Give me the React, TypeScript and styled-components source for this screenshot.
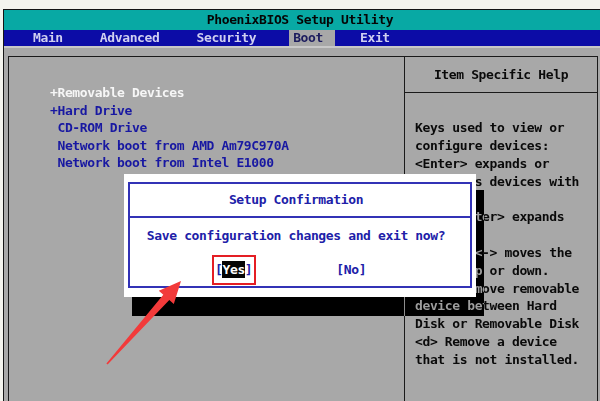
import React from 'react';
import styled, { createGlobalStyle } from 'styled-components';

const GlobalStyle = createGlobalStyle`
  html, body {
    margin: 0;
    padding: 0;
    background: #f4f4ee;
  }
`;

const MONO = `"DejaVu Sans Mono", "Liberation Mono", monospace`;

const Screen = styled.div`
  position: relative;
  width: 600px;
  height: 401px;
  box-sizing: border-box;
  padding: 9px 0 0 3px;
  background: #f4f4ee;
  overflow: hidden;
  font-family: ${MONO};
  font-size: 13px;
  letter-spacing: -0.37px;
  font-weight: bold;
`;

const Frame = styled.div`
  height: 100%;
  display: flex;
  flex-direction: column;
  border-top: 1px solid #151515;
  border-left: 1px solid #151515;
`;

const TitleBar = styled.div`
  height: 20px;
  line-height: 20px;
  background: #08a9a4;
  color: #050505;
  text-align: center;
  padding-right: 4px;
`;

const MenuBar = styled.div`
  height: 16px;
  display: flex;
  gap: 21px;
  padding-left: 25px;
  background: #0c0ca6;
`;

const Tab = styled.div<{ $active?: boolean }>`
  line-height: 16px;
  padding: 0 12px 0 4px;
  color: ${(p) => (p.$active ? '#1c1c5e' : '#cfcff0')};
  background: ${(p) => (p.$active ? '#a8a8a8' : 'transparent')};
`;

const Body = styled.div`
  flex: 1;
  display: flex;
  background: #a8a8a8;
  border-top: 2px solid #c8c8c8;
  padding: 8px 2px 0 4px;
`;

const Panels = styled.div`
  flex: 1;
  display: flex;
  border: 1px solid #1a1a1a;
  border-bottom: none;
`;

const BootList = styled.div`
  width: 396px;
  border-right: 1px solid #1a1a1a;
  padding: 27px 0 0 41px;
  box-sizing: border-box;
  line-height: 17.6px;
`;

const BootItem = styled.div<{ $selected?: boolean }>`
  white-space: pre;
  color: ${(p) => (p.$selected ? '#f6f6f6' : '#1818a2')};
`;

const HelpPanel = styled.div`
  flex: 1;
  display: flex;
  flex-direction: column;
`;

const HelpHeader = styled.div`
  height: 35px;
  line-height: 35px;
  text-align: center;
  color: #0a0a0a;
  border-bottom: 1px solid #1a1a1a;
`;

const HelpText = styled.div`
  padding: 26px 0 0 10px;
  line-height: 17.85px;
  color: #0a0a0a;
  white-space: pre;
`;

/* drop shadow of the popup: inverts the gray backdrop to black */
const DialogShadow = styled.div`
  position: absolute;
  left: 132px;
  top: 190px;
  width: 352px;
  height: 126px;
  background: #a8a8a8;
  mix-blend-mode: difference;
`;

const Dialog = styled.div`
  position: absolute;
  left: 124px;
  top: 174px;
  width: 352px;
  height: 123px;
  box-sizing: border-box;
  padding: 8px 4px 9px 4px;
  background: #ffffff;
  display: flex;
`;

const DialogInner = styled.div`
  flex: 1;
  display: flex;
  flex-direction: column;
  border: 2px solid #3232b6;
  color: #2020a8;
`;

const DialogTitle = styled.div`
  height: 32px;
  line-height: 32px;
  text-align: center;
  padding-right: 8px;
  border-bottom: 2px solid #3232b6;
`;

const Question = styled.div`
  padding: 9px 8px 0 0;
  line-height: 17.6px;
  text-align: center;
`;

const Choices = styled.div`
  display: flex;
  align-items: center;
  margin-top: 10px;
  padding-left: 82px;
  line-height: 17px;
`;

const Marked = styled.span`
  display: inline-flex;
  padding: 4px 2px 5px 1px;
  border: 2px solid #e41e24;
`;

const Current = styled.span`
  background: #050505;
  color: #ffffff;
`;

const Choice = styled.span<{ $gap?: number }>`
  margin-left: ${(p) => p.$gap ?? 0}px;
`;

const Overlay = styled.svg`
  position: absolute;
  left: 0;
  top: 0;
  pointer-events: none;
`;

const bootOrder = [
  { label: '+Removable Devices', selected: true },
  { label: '+Hard Drive' },
  { label: ' CD-ROM Drive' },
  { label: ' Network boot from AMD Am79C970A' },
  { label: ' Network boot from Intel E1000' },
];

const helpLines = [
  'Keys used to view or',
  'configure devices:',
  '<Enter> expands or',
  'collapses devices with',
  'a + or -',
  '<Ctrl+Enter> expands',
  'all',
  '<+> and <-> moves the',
  'device up or down.',
  '<n> May move removable',
  'device between Hard',
  'Disk or Removable Disk',
  '<d> Remove a device',
  'that is not installed.',
];

const tabs = ['Main', 'Advanced', 'Security', 'Boot', 'Exit'];

const App: React.FC = () => {
  return (
    <>
      <GlobalStyle />
      <Screen>
        <Frame>
          <TitleBar>PhoenixBIOS Setup Utility</TitleBar>
          <MenuBar>
            {tabs.map((t) => (
              <Tab key={t} $active={t === 'Boot'}>
                {t}
              </Tab>
            ))}
          </MenuBar>
          <Body>
            <Panels>
              <BootList>
                {bootOrder.map((item) => (
                  <BootItem key={item.label} $selected={item.selected}>
                    {item.label}
                  </BootItem>
                ))}
              </BootList>
              <HelpPanel>
                <HelpHeader>Item Specific Help</HelpHeader>
                <HelpText>{helpLines.join('\n')}</HelpText>
              </HelpPanel>
            </Panels>
          </Body>
        </Frame>

        <DialogShadow />
        <Dialog>
          <DialogInner>
            <DialogTitle>Setup Confirmation</DialogTitle>
            <Question>Save configuration changes and exit now?</Question>
            <Choices>
              <Marked>
                [<Current>Yes</Current>]
              </Marked>
              <Choice $gap={80}>[No]</Choice>
            </Choices>
          </DialogInner>
        </Dialog>

        {/* red pointer arrow */}
        <Overlay width="600" height="401" viewBox="0 0 600 401">
          <polygon
            points="107.6,364.5 169.3,300.1 173.8,304.1 181,281 158.8,290.7 163.3,294.7 106.4,363.5"
            fill="#f23a3a"
          />
        </Overlay>
      </Screen>
    </>
  );
};

export default App;
